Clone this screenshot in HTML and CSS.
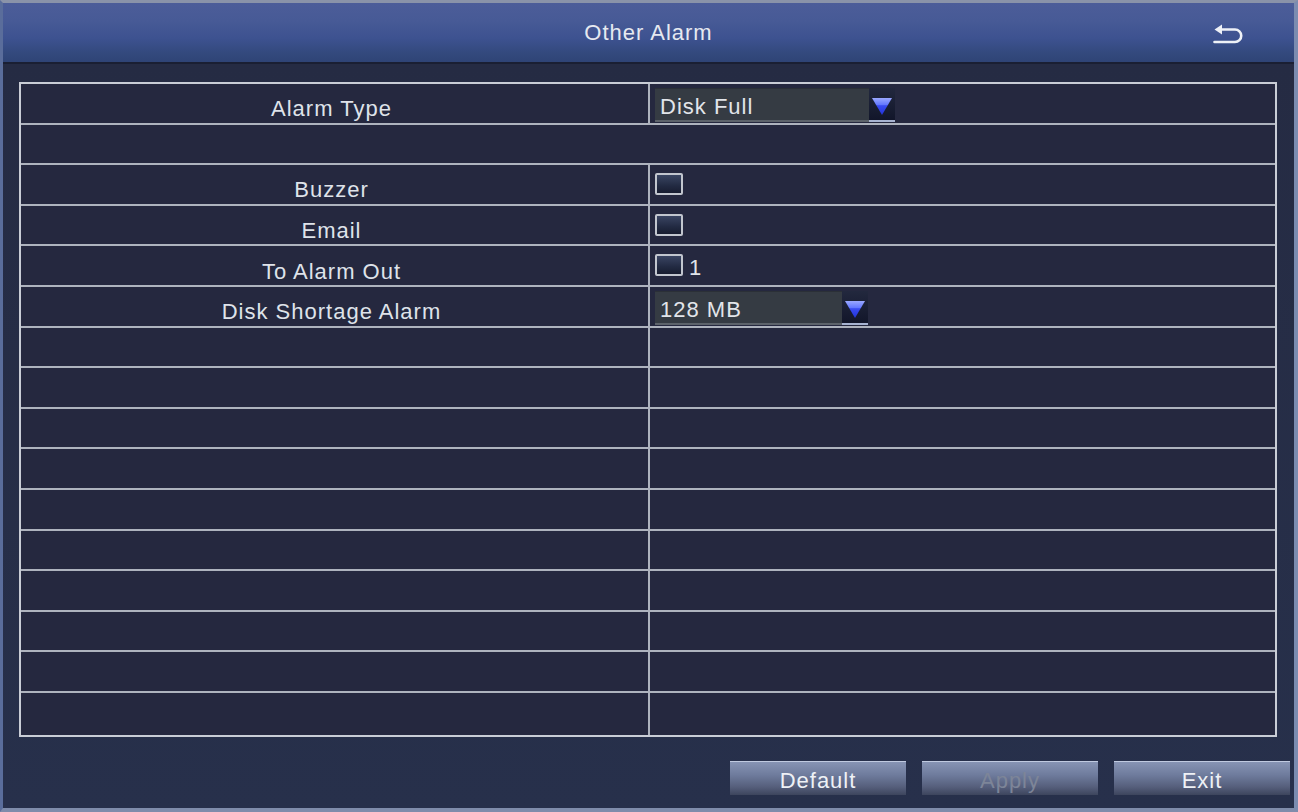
FILE: index.html
```html
<!DOCTYPE html>
<html lang="en">
<head>
<meta charset="utf-8">
<title>Other Alarm</title>
<link rel="stylesheet" href="styles.css">
</head>
<body>
<div class="screen">
  <header class="titlebar">
    <span class="spacer"></span>
    <h1 class="title">Other Alarm</h1>
    <button class="back" type="button" aria-label="Back">
      <svg width="32" height="24" viewBox="0 0 32 24">
        <path d="M9 7.5 H23 A6.25 6.25 0 0 1 23 20 H2.5" fill="none" stroke="#eef1f7" stroke-width="2.6" stroke-linecap="round"/>
        <polygon points="2.5,7.5 10,2.5 10,12.5" fill="#eef1f7"/>
      </svg>
    </button>
  </header>

  <main class="content">
    <div class="grid">
      <div class="row">
        <div class="label">Alarm Type</div>
        <div class="value">
          <div class="select wide">
            <span class="sel-text">Disk Full</span>
            <span class="sel-arrow"><svg width="20" height="17" viewBox="0 0 20 17"><defs><linearGradient id="tg1" x1="0" y1="0" x2="0" y2="1"><stop offset="0" stop-color="#9aa8ff"/><stop offset="0.4" stop-color="#6277ff"/><stop offset="0.45" stop-color="#3a4cf2"/><stop offset="1" stop-color="#2233d8"/></linearGradient></defs><polygon points="0,0 20,0 10,17" fill="url(#tg1)"/></svg></span>
          </div>
        </div>
      </div>
      <div class="row span"></div>
      <div class="row">
        <div class="label">Buzzer</div>
        <div class="value"><span class="check"></span></div>
      </div>
      <div class="row">
        <div class="label">Email</div>
        <div class="value"><span class="check"></span></div>
      </div>
      <div class="row">
        <div class="label">To Alarm Out</div>
        <div class="value"><span class="check"></span><span class="num">1</span></div>
      </div>
      <div class="row">
        <div class="label">Disk Shortage Alarm</div>
        <div class="value">
          <div class="select narrow">
            <span class="sel-text">128 MB</span>
            <span class="sel-arrow"><svg width="20" height="17" viewBox="0 0 20 17"><defs><linearGradient id="tg2" x1="0" y1="0" x2="0" y2="1"><stop offset="0" stop-color="#9aa8ff"/><stop offset="0.4" stop-color="#6277ff"/><stop offset="0.45" stop-color="#3a4cf2"/><stop offset="1" stop-color="#2233d8"/></linearGradient></defs><polygon points="0,0 20,0 10,17" fill="url(#tg2)"/></svg></span>
          </div>
        </div>
      </div>
      <div class="row"><div class="label"></div><div class="value"></div></div>
      <div class="row"><div class="label"></div><div class="value"></div></div>
      <div class="row"><div class="label"></div><div class="value"></div></div>
      <div class="row"><div class="label"></div><div class="value"></div></div>
      <div class="row"><div class="label"></div><div class="value"></div></div>
      <div class="row"><div class="label"></div><div class="value"></div></div>
      <div class="row"><div class="label"></div><div class="value"></div></div>
      <div class="row"><div class="label"></div><div class="value"></div></div>
      <div class="row"><div class="label"></div><div class="value"></div></div>
      <div class="row last"><div class="label"></div><div class="value"></div></div>
    </div>

    <div class="actions">
      <button class="btn" type="button">Default</button>
      <button class="btn disabled" type="button">Apply</button>
      <button class="btn" type="button">Exit</button>
    </div>
  </main>
</div>
</body>
</html>
```

FILE: styles.css
```css
* { box-sizing: border-box; }

html, body {
  margin: 0;
  padding: 0;
  background: #1e2438;
}

body {
  font-family: "Liberation Sans", Arial, sans-serif;
  font-size: 22px;
  letter-spacing: 1px;
  color: #dfe3ea;
}

.screen {
  width: 1298px;
  height: 812px;
  display: flex;
  flex-direction: column;
  border-top: 3px solid #8a93a9;
  border-left: 3px solid #5a6d9b;
  border-right: 4px solid #7b8cb0;
  border-bottom: 4px solid #7f8cab;
  background: #262d47;
  overflow: hidden;
}

.titlebar {
  height: 61px;
  flex: none;
  display: grid;
  grid-template-columns: 1fr auto 1fr;
  align-items: center;
  background: linear-gradient(#4c5d99 0%, #475a96 30%, #3d5290 60%, #33497d 85%, #2f4476 100%);
  border-bottom: 2px solid #1a1f33;
}

.title {
  margin: 0;
  font-size: 22px;
  font-weight: normal;
  color: #e6e9f0;
  letter-spacing: 1px;
}

.back {
  justify-self: end;
  margin-right: 50px;
  padding: 0;
  border: 0;
  background: none;
  display: flex;
  margin-top: 2px;
}

.content {
  flex: 1;
  display: flex;
  flex-direction: column;
  padding: 18px 4px 0 16px;
  background: linear-gradient(#252b43, #27304b);
}

.grid {
  height: 655px;
  margin-right: 13px;
  display: flex;
  flex-direction: column;
  border: 2px solid #c9cdd6;
  background: #25283f;
}

.row {
  height: 40.6px;
  flex: none;
  display: flex;
  border-bottom: 2px solid #aeb3be;
}

.row.last {
  flex: 1;
  height: auto;
  border-bottom: 0;
}

.label {
  width: 629px;
  flex: none;
  border-right: 2px solid #aeb3be;
  display: flex;
  align-items: center;
  justify-content: center;
  padding: 12px 6px 0 0;
  white-space: nowrap;
}

.value {
  flex: 1;
  display: flex;
  align-items: center;
  padding: 2px 0 0 5px;
}

.select {
  display: flex;
  height: 34px;
  margin-top: 2px;
}

.select.wide { width: 240px; }
.select.narrow { width: 213px; }

.sel-text {
  flex: 1;
  display: flex;
  align-items: center;
  padding: 5px 0 0 5px;
  background: #353b43;
  border-top: 1px solid #2b3037;
  border-bottom: 2px solid #5d636b;
  color: #e2e5ea;
}

.sel-arrow {
  width: 26px;
  flex: none;
  display: flex;
  align-items: center;
  justify-content: center;
  padding-top: 5px;
  background: linear-gradient(#22283e, #12162a);
  border-bottom: 2px solid #a7b3d1;
}

.check {
  width: 28px;
  height: 22px;
  flex: none;
  border: 2px solid #c2c6ce;
  border-radius: 2px;
  background: linear-gradient(#3a4562, #222a42 60%, #181d30);
  margin-top: -3px;
}

.num {
  margin-left: 6px;
  padding-top: 2px;
  color: #e0e3e9;
}

.actions {
  display: flex;
  justify-content: flex-end;
  gap: 16px;
  margin-top: 24px;
}

.btn {
  width: 176px;
  height: 34px;
  padding: 4px 0 0;
  font-family: "Liberation Sans", Arial, sans-serif;
  font-size: 22px;
  letter-spacing: 1px;
  color: #eef1f6;
  border: 0;
  border-top: 1px solid #c0cae0;
  background: linear-gradient(#8794b4 0%, #6e7b9c 40%, #565f7c 75%, #3d455d 100%);
}

.btn.disabled {
  color: #7d8598;
}
```
